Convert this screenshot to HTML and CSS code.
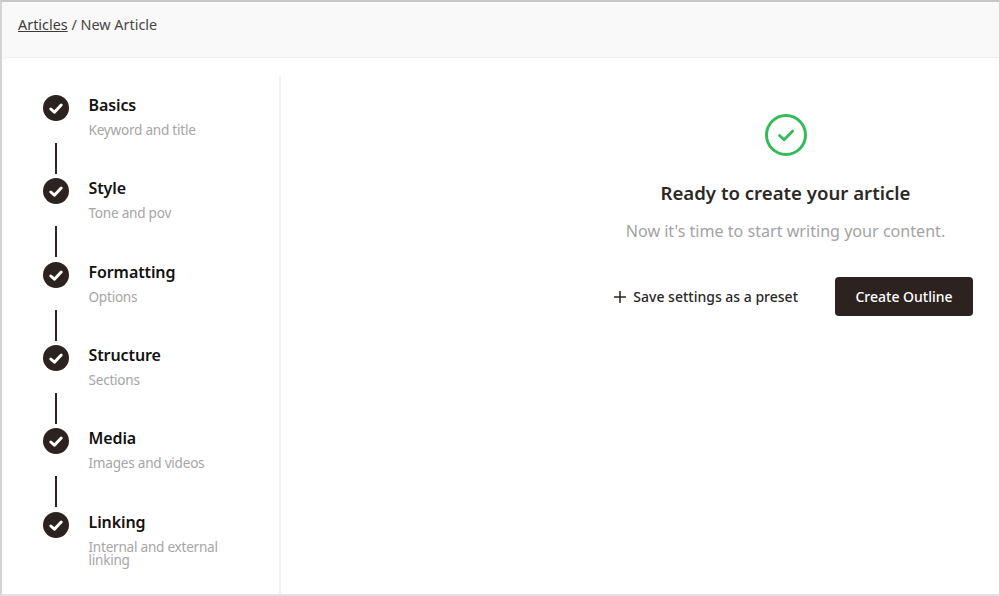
FILE: index.html
```html
<!DOCTYPE html>
<html lang="en">
<head>
<meta charset="utf-8">
<title>New Article</title>
<link rel="stylesheet" href="styles.css">
</head>
<body>
<div class="frame">
  <header class="topbar">
    <a class="crumb-link" href="#">Articles</a><span class="crumb-rest"> / New Article</span>
  </header>
  <div class="card">
    <aside class="steps">
      <div class="step">
        <div class="marker"><span class="dot"><svg viewBox="0 0 26 26"><path d="M7.8 14l3.6 3.2 6.8-7.2" /></svg></span><span class="line"></span></div>
        <div class="step-text"><div class="step-title">Basics</div><div class="step-sub">Keyword and title</div></div>
      </div>
      <div class="step">
        <div class="marker"><span class="dot"><svg viewBox="0 0 26 26"><path d="M7.8 14l3.6 3.2 6.8-7.2" /></svg></span><span class="line"></span></div>
        <div class="step-text"><div class="step-title">Style</div><div class="step-sub">Tone and pov</div></div>
      </div>
      <div class="step">
        <div class="marker"><span class="dot"><svg viewBox="0 0 26 26"><path d="M7.8 14l3.6 3.2 6.8-7.2" /></svg></span><span class="line"></span></div>
        <div class="step-text"><div class="step-title">Formatting</div><div class="step-sub">Options</div></div>
      </div>
      <div class="step">
        <div class="marker"><span class="dot"><svg viewBox="0 0 26 26"><path d="M7.8 14l3.6 3.2 6.8-7.2" /></svg></span><span class="line"></span></div>
        <div class="step-text"><div class="step-title">Structure</div><div class="step-sub">Sections</div></div>
      </div>
      <div class="step">
        <div class="marker"><span class="dot"><svg viewBox="0 0 26 26"><path d="M7.8 14l3.6 3.2 6.8-7.2" /></svg></span><span class="line"></span></div>
        <div class="step-text"><div class="step-title">Media</div><div class="step-sub">Images and videos</div></div>
      </div>
      <div class="step">
        <div class="marker"><span class="dot"><svg viewBox="0 0 26 26"><path d="M7.8 14l3.6 3.2 6.8-7.2" /></svg></span></div>
        <div class="step-text"><div class="step-title">Linking</div><div class="step-sub">Internal and external linking</div></div>
      </div>
    </aside>
    <main class="main">
      <div class="panel">
        <svg class="ok" viewBox="0 0 42 42"><circle cx="21" cy="21" r="19.5" /><path d="M14.5 21.5l4.6 4.3 8.6-8.8" /></svg>
        <h1 class="heading">Ready to create your article</h1>
        <p class="lead">Now it's time to start writing your content.</p>
        <div class="actions">
          <button class="preset" type="button"><svg viewBox="0 0 12 12"><path d="M6 0v12M0 6h12" /></svg>Save settings as a preset</button>
          <button class="create" type="button">Create Outline</button>
        </div>
      </div>
    </main>
  </div>
</div>
</body>
</html>
```

FILE: styles.css
```css
* { box-sizing: border-box; }
html, body { margin: 0; height: 100%; }
body {
  font-family: "Noto Sans", "Open Sans", sans-serif;
  background: #fff;
  overflow: hidden;
}
.frame {
  width: 1000px;
  height: 596px;
  border: 2px solid #d4d4d4;
  border-top-color: #c6c6c6;
  border-right-width: 1px;
  border-bottom-color: #e2e2e2;
  background: #f9f9f9;
  display: flex;
  flex-direction: column;
  overflow: hidden;
}
.topbar {
  height: 55px;
  flex: none;
  padding: 13px 0 0 16px;
  font-size: 14.4px;
  line-height: 20px;
  color: #4a4644;
}
.crumb-link { color: #3f3a38; text-decoration: underline; }
.card {
  flex: 1;
  display: flex;
  background: #fff;
  border-top: 1px solid #eee;
  border-top-left-radius: 6px;
  padding-top: 17px;
  min-height: 0;
}
.steps {
  width: 279px;
  flex: none;
  border-right: 2px solid #f3f3f3;
  padding: 20px 0 0 41px;
}
.step {
  display: flex;
  height: 83.33px;
}
.marker {
  width: 26px;
  flex: none;
  display: flex;
  flex-direction: column;
  align-items: center;
}
.dot {
  width: 26px;
  height: 26px;
  border-radius: 50%;
  background: #2c2320;
  flex: none;
}
.dot svg { display: block; width: 26px; height: 26px; }
.dot path { fill: none; stroke: #fff; stroke-width: 3; stroke-linecap: round; stroke-linejoin: round; }
.line {
  width: 2px;
  height: 31px;
  margin-top: 22px;
  background: #2c2320;
  flex: none;
}
.step-text { margin-left: 19.5px; width: 140px; margin-top: -1px; }
.step-title {
  font-size: 16px;
  font-weight: 600;
  letter-spacing: -0.1px;
  line-height: 22px;
  color: #141110;
  margin-bottom: 2px;
}
.step-sub {
  font-size: 13.6px;
  letter-spacing: -0.25px;
  line-height: 13.5px;
  padding-top: 5px;
  color: #a6a6a6;
}
.main {
  flex: 1;
  display: flex;
  justify-content: flex-end;
  padding-right: 26px;
}
.panel {
  width: 372px;
  display: flex;
  flex-direction: column;
  align-items: center;
  padding-top: 39px;
  padding-right: 3px;
}
.ok { display: block; width: 42px; height: 42px; }
.ok circle { fill: none; stroke: #35bb58; stroke-width: 3; }
.ok path { fill: none; stroke: #35bb58; stroke-width: 2.8; stroke-linecap: round; stroke-linejoin: round; }
.heading {
  margin: 23px 0 0;
  font-size: 18.6px;
  font-weight: 600;
  line-height: 28px;
  color: #2c2826;
}
.lead {
  margin: 11px 0 0;
  font-size: 16.1px;
  line-height: 26px;
  color: #a3a3a3;
}
.actions {
  align-self: stretch;
  margin-right: -3px;
  display: flex;
  justify-content: flex-end;
  align-items: center;
  gap: 37px;
  margin-top: 33px;
}
.preset, .create {
  font-family: inherit;
  border: 0;
  font-size: 14px;
  font-weight: 500;
  cursor: pointer;
}
.preset {
  background: none;
  padding: 0;
  color: #2c2826;
  display: flex;
  align-items: center;
  gap: 7px;
}
.preset svg { width: 12px; height: 12px; }
.preset path { stroke: #2c2320; stroke-width: 1.5; fill: none; }
.create {
  width: 138px;
  height: 39px;
  border-radius: 4px;
  background: #2c2320;
  color: #fff;
}
```
